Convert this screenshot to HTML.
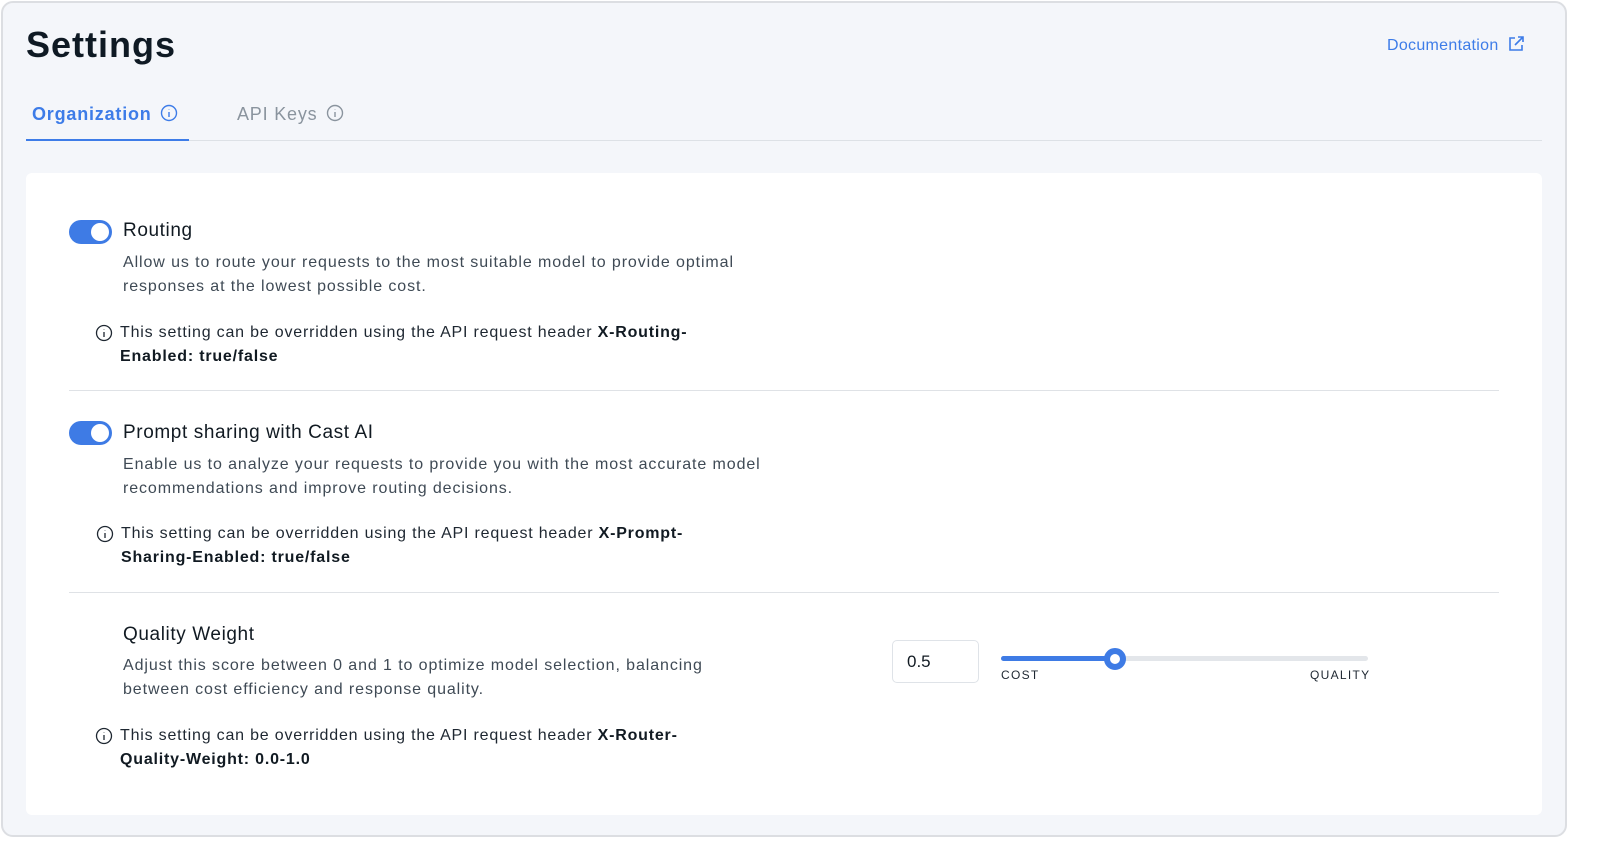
<!DOCTYPE html><html><head><style>
*{margin:0;padding:0;box-sizing:border-box}
body{width:1600px;height:855px;background:#fff;font-family:"Liberation Sans",sans-serif;position:relative;overflow:hidden}
.frame{position:absolute;left:1px;top:1px;width:1566px;height:836px;border:2px solid #dcdee2;border-radius:12px;background:#f4f6fa}
.abs{position:absolute}
h1{position:absolute;left:26px;top:24px;font-size:36px;font-weight:bold;color:#0f1a24;letter-spacing:1px}
.doc{left:1387px;top:35px;font-size:16px;color:#3d7ce8;letter-spacing:0.3px}
.tab{top:104px;font-size:18px;font-weight:bold;letter-spacing:0.8px}
.card{position:absolute;left:26px;top:173px;width:1516px;height:642px;background:#fff;border-radius:6px}
.tog{position:absolute;width:43px;height:24px;border-radius:12px;background:#3e7be5}
.tog:after{content:"";position:absolute;right:3px;top:3px;width:18px;height:18px;border-radius:50%;background:#fff}
.t{position:absolute;font-size:19px;color:#111a22;letter-spacing:0.6px}
.d{position:absolute;font-size:16px;line-height:24px;color:#3f4a55;letter-spacing:0.9px}
.n{position:absolute;font-size:16px;line-height:24px;color:#1e2731;letter-spacing:0.8px}
.n b{color:#111a22}
.hr{position:absolute;left:69px;width:1430px;height:1px;background:#dfe2e6}
</style></head><body>
<div class="frame"></div>
<div class="card"></div>
<h1>Settings</h1>
<div class="abs doc">Documentation <svg width="18" height="18" viewBox="0 0 18 18" style="vertical-align:-3px;margin-left:4px" fill="none" stroke="#3d7ce8" stroke-width="1.6"><path d="M8 3H3v12h12v-5M11 2h5v5M16 2L8 10"/></svg></div>
<div class="abs tab" style="left:32px;color:#3d7ce8">Organization <svg width="18" height="18" viewBox="0 0 18 18" style="vertical-align:-2px;margin-left:3px" fill="none" stroke="#3d7ce8" stroke-width="1.4"><circle cx="9" cy="9" r="7.5"/><path d="M9 8v5M9 5.2v.4"/></svg></div>
<div class="abs tab" style="left:237px;color:#8a949e;font-weight:normal">API Keys <svg width="18" height="18" viewBox="0 0 18 18" style="vertical-align:-2px;margin-left:3px" fill="none" stroke="#8a949e" stroke-width="1.4"><circle cx="9" cy="9" r="7.5"/><path d="M9 8v5M9 5.2v.4"/></svg></div>
<div class="abs" style="left:26px;top:140px;width:1516px;height:1px;background:#dde1e6"></div>
<div class="abs" style="left:26px;top:139px;width:163px;height:2px;background:#3d7ce8"></div>
<div class="tog" style="left:69px;top:220px"></div>
<div class="t" style="left:123px;top:220px">Routing</div>
<div class="d" style="left:123px;top:251px">Allow us to route your requests to the most suitable model to provide optimal<br>responses at the lowest possible cost.</div>
<svg class="abs" style="left:95px;top:324px" width="18" height="18" viewBox="0 0 18 18" fill="none" stroke="#1e2731" stroke-width="1.3"><circle cx="9" cy="9" r="7.5"/><path d="M9 8v5M9 5.2v.4"/></svg>
<div class="n" style="left:120px;top:321px">This setting can be overridden using the API request header <b>X-Routing-<br>Enabled: true/false</b></div>
<div class="hr" style="top:390px"></div>
<div class="tog" style="left:69px;top:421px"></div>
<div class="t" style="left:123px;top:422px">Prompt sharing with Cast AI</div>
<div class="d" style="left:123px;top:453px">Enable us to analyze your requests to provide you with the most accurate model<br>recommendations and improve routing decisions.</div>
<svg class="abs" style="left:96px;top:525px" width="18" height="18" viewBox="0 0 18 18" fill="none" stroke="#1e2731" stroke-width="1.3"><circle cx="9" cy="9" r="7.5"/><path d="M9 8v5M9 5.2v.4"/></svg>
<div class="n" style="left:121px;top:522px">This setting can be overridden using the API request header <b>X-Prompt-<br>Sharing-Enabled: true/false</b></div>
<div class="hr" style="top:592px"></div>
<div class="t" style="left:123px;top:624px">Quality Weight</div>
<div class="d" style="left:123px;top:654px">Adjust this score between 0 and 1 to optimize model selection, balancing<br>between cost efficiency and response quality.</div>
<svg class="abs" style="left:95px;top:727px" width="18" height="18" viewBox="0 0 18 18" fill="none" stroke="#1e2731" stroke-width="1.3"><circle cx="9" cy="9" r="7.5"/><path d="M9 8v5M9 5.2v.4"/></svg>
<div class="n" style="left:120px;top:724px">This setting can be overridden using the API request header <b>X-Router-<br>Quality-Weight: 0.0-1.0</b></div>
<div class="abs" style="left:892px;top:640px;width:87px;height:43px;border:1px solid #dfe3e8;border-radius:5px;font-size:17px;color:#111a22;padding:11px 0 0 14px">0.5</div>
<div class="abs" style="left:1001px;top:656px;width:367px;height:5px;border-radius:3px;background:#e3e6ea"></div>
<div class="abs" style="left:1001px;top:656px;width:114px;height:5px;border-radius:3px;background:#3e7be5"></div>
<div class="abs" style="left:1104px;top:648px;width:22px;height:22px;border-radius:50%;background:#fff;border:6px solid #3e7be5"></div>
<div class="abs" style="left:1001px;top:668px;font-size:12px;letter-spacing:1.3px;color:#1e2731">COST</div>
<div class="abs" style="left:1310px;top:668px;font-size:12px;letter-spacing:1.3px;color:#1e2731">QUALITY</div>
</body></html>
